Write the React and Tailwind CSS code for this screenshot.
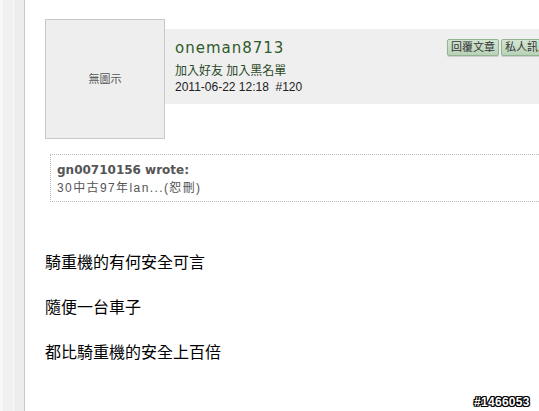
export default function App() {
  const cjk = { fontFamily: '"Liberation Sans", "Noto Sans CJK TC", sans-serif' };
  return (
    <div className="flex w-[539px] h-[411px] overflow-hidden bg-white" style={cjk}>
      <div className="flex shrink-0 h-full">
        <div className="w-[3px] bg-[#f7f7f7]" />
        <div className="w-[10px] bg-[#f0f0f0]" />
        <div className="w-[1px] bg-[#f8f8f8]" />
        <div className="w-[10px] bg-[#ededed]" />
        <div className="w-[1px] bg-[#c9c9c9]" />
      </div>
      <div className="flex flex-col shrink-0 w-[620px] pl-[20px] pt-[19px]">
        <div className="flex">
          <div className="w-[120px] h-[120px] shrink-0 border border-[#c8c8c8] bg-[#eeeeee] flex items-center justify-center text-[11px] text-[#555]">
            無圖示
          </div>
          <div className="mt-[10px] h-[75px] flex-1 bg-[#efefef] flex pl-[10px] pt-[9px]">
            <div className="w-[272px] flex flex-col">
              <div className="text-[15px] leading-[20px] tracking-[1px] text-[#2f5a2c]" style={{ fontFamily: '"DejaVu Sans", sans-serif' }}>
                oneman8713
              </div>
              <div className="mt-[6px] text-[12px] leading-[14px] text-[#2b4a28]">加入好友 加入黑名單</div>
              <div className="mt-[2px] text-[12px] leading-[14px] text-[#222]">2011-06-22 12:18&nbsp; #120</div>
            </div>
            <div className="flex gap-[2px] pt-[1px]">
              <div className="h-[17px] px-[3px] rounded-[2px] border border-[#93b493] bg-gradient-to-b from-[#d3e6d3] to-[#b8d2b8] text-[11px] leading-[15px] text-[#333] shadow-[0_1px_1px_rgba(0,0,0,0.15)]">
                回覆文章
              </div>
              <div className="h-[17px] px-[3px] rounded-[2px] border border-[#93b493] bg-gradient-to-b from-[#d3e6d3] to-[#b8d2b8] text-[11px] leading-[15px] text-[#333] shadow-[0_1px_1px_rgba(0,0,0,0.15)]">
                私人訊息
              </div>
            </div>
          </div>
        </div>
        <div className="ml-[5px] mt-[15px] h-[48px] border border-dotted border-[#bbbbbb] pl-[6px] pt-[6px]">
          <div className="text-[12px] leading-[18px] font-bold text-[#555]" style={{ fontFamily: '"DejaVu Sans", sans-serif' }}>
            gn00710156 wrote:
          </div>
          <div className="text-[12px] leading-[18px] tracking-[1.4px] text-[#555]">30中古97年lan...(恕刪)</div>
        </div>
        <div className="mt-[48px] text-[16px] leading-[22.5px] text-black" style={{ fontFamily: '"Noto Sans CJK TC", sans-serif' }}>
          <div>騎重機的有何安全可言</div>
          <div className="h-[22.5px]" />
          <div>隨便一台車子</div>
          <div className="h-[22.5px]" />
          <div>都比騎重機的安全上百倍</div>
        </div>
      </div>
      <div className="absolute left-[474px] top-[395px] text-[12px] leading-[14px] font-bold text-white tracking-[0.3px] [text-shadow:1px_0_0_#000,-1px_0_0_#000,0_1px_0_#000,0_-1px_0_#000,1px_1px_0_#000,-1px_-1px_0_#000,1px_-1px_0_#000,-1px_1px_0_#000]">
        #1466053
      </div>
    </div>
  );
}
